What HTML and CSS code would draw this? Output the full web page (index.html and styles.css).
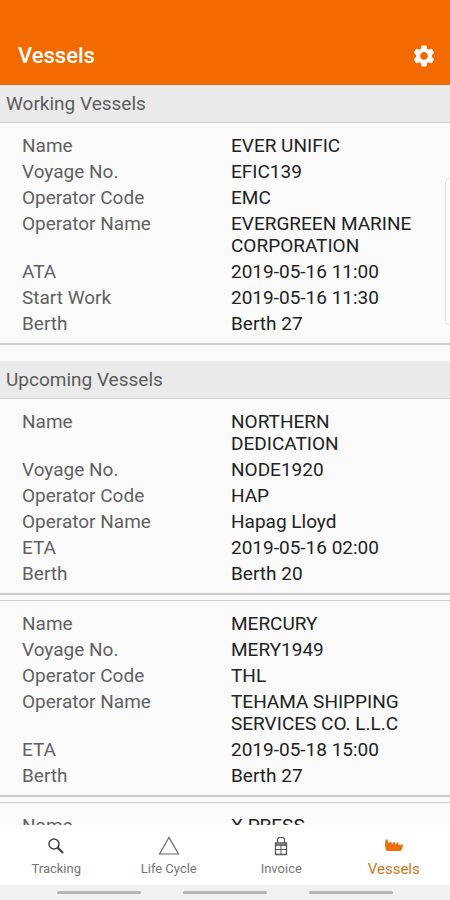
FILE: index.html
```html
<!DOCTYPE html>
<html lang="en">
<head>
    <meta charset="UTF-8">
    <meta name="viewport" content="width=device-width, initial-scale=1.0">
    <title>Vessels</title>
    <link rel="stylesheet" href="styles.css">
</head>
<body>
    <header class="app-bar">
        <h1>Vessels</h1>
        <button class="settings" aria-label="Settings">
            <svg viewBox="0 0 24 24" width="26" height="26" fill="currentColor">
                <path d="M19.14 12.94c.04-.3.06-.61.06-.94s-.02-.64-.07-.94l2.03-1.58c.18-.14.23-.41.12-.61l-1.92-3.32c-.12-.22-.37-.29-.59-.22l-2.39.96c-.5-.38-1.03-.7-1.62-.94l-.36-2.54c-.04-.24-.24-.41-.48-.41h-3.84c-.24 0-.43.17-.47.41l-.36 2.54c-.59.24-1.13.57-1.62.94l-2.39-.96c-.22-.08-.47 0-.59.22L2.74 8.87c-.12.21-.08.47.12.61l2.03 1.58c-.05.3-.09.63-.09.94s.02.64.07.94l-2.03 1.58c-.18.14-.23.41-.12.61l1.92 3.32c.12.22.37.29.59.22l2.39-.96c.5.38 1.03.7 1.62.94l.36 2.54c.05.24.24.41.48.41h3.84c.24 0 .44-.17.47-.41l.36-2.54c.59-.24 1.13-.56 1.62-.94l2.39.96c.22.08.47 0 .59-.22l1.92-3.32c.12-.22.07-.47-.12-.61l-2.01-1.58zM12 15.6c-1.98 0-3.6-1.62-3.6-3.6s1.62-3.6 3.6-3.6 3.6 1.62 3.6 3.6-1.62 3.6-3.6 3.6z"/>
            </svg>
        </button>
    </header>

    <main class="content">
        <section class="group">
            <h2>Working Vessels</h2>
            <dl class="vessel">
                <dt>Name</dt><dd>EVER UNIFIC</dd>
                <dt>Voyage No.</dt><dd>EFIC139</dd>
                <dt>Operator Code</dt><dd>EMC</dd>
                <dt>Operator Name</dt><dd>EVERGREEN MARINE CORPORATION</dd>
                <dt>ATA</dt><dd>2019-05-16 11:00</dd>
                <dt>Start Work</dt><dd>2019-05-16 11:30</dd>
                <dt>Berth</dt><dd>Berth 27</dd>
            </dl>
        </section>

        <section class="group">
            <h2>Upcoming Vessels</h2>
            <dl class="vessel">
                <dt>Name</dt><dd>NORTHERN DEDICATION</dd>
                <dt>Voyage No.</dt><dd>NODE1920</dd>
                <dt>Operator Code</dt><dd>HAP</dd>
                <dt>Operator Name</dt><dd>Hapag Lloyd</dd>
                <dt>ETA</dt><dd>2019-05-16 02:00</dd>
                <dt>Berth</dt><dd>Berth 20</dd>
            </dl>
            <dl class="vessel">
                <dt>Name</dt><dd>MERCURY</dd>
                <dt>Voyage No.</dt><dd>MERY1949</dd>
                <dt>Operator Code</dt><dd>THL</dd>
                <dt>Operator Name</dt><dd>TEHAMA SHIPPING SERVICES CO. L.L.C</dd>
                <dt>ETA</dt><dd>2019-05-18 15:00</dd>
                <dt>Berth</dt><dd>Berth 27</dd>
            </dl>
            <dl class="vessel">
                <dt>Name</dt><dd>X PRESS</dd>
            </dl>
        </section>
        <div class="edge-handle"></div>
    </main>

    <nav class="tabs">
        <a href="#tracking">
            <svg viewBox="0 0 24 24" width="24" height="24" fill="none" stroke="#444">
                <circle cx="10" cy="10" r="5" stroke-width="1.5"/>
                <path d="M13.6 13.6L19 19" stroke-width="2.4"/>
            </svg>
            <span>Tracking</span>
        </a>
        <a href="#lifecycle">
            <svg viewBox="0 0 24 24" width="24" height="24" fill="none" stroke="#666">
                <path d="M12 3.5L21.5 20H2.5z" stroke-width="1.2"/>
            </svg>
            <span>Life Cycle</span>
        </a>
        <a href="#invoice">
            <svg viewBox="0 0 24 24" width="24" height="24" fill="none" stroke="#555">
                <path d="M8.5 9V5L10 3.5h4L15.5 5v4" stroke-width="1.2"/>
                <path d="M6.5 9h11v11.500h-11z" stroke-width="1.3"/>
                <path d="M7 11h10" stroke-width="1.6"/>
                <path d="M7 15.500h10M12 11v9.500" stroke-width="1"/>
            </svg>
            <span>Invoice</span>
        </a>
        <a href="#vessels" class="active">
            <svg viewBox="0 0 24 24" width="24" height="24" fill="#ee6c0c">
                <path d="M3.500 5.500h2l.6 3.200 1.400.6V7.800h2v1.700l1.500.4V8.200h2v1.900l1.500.2V8.500h2v2.400l4.800-.4-1.600 4.700c-.4 1.200-1 1.800-2 1.800H5.500c-1 0-1.500-.6-1.700-1.500l-.8-4z"/>
            </svg>
            <span>Vessels</span>
        </a>
    </nav>

    <div class="system-bar">
        <i></i><i></i><i></i>
    </div>
</body>
</html>
```
FILE: styles.css
```css
* {
    margin: 0;
    padding: 0;
    box-sizing: border-box;
}

body {
    display: flex;
    flex-direction: column;
    height: 100vh;
    background: #fafafa;
    color: #222;
    font-family: Roboto, sans-serif;
    font-size: 19px;
    line-height: 22px;
}

.app-bar {
    display: flex;
    justify-content: space-between;
    align-items: center;
    padding: 41px 13px 15px 18px;
    background: #f26a00;
    color: #fff;
}

.app-bar h1 {
    font-size: 22px;
    font-weight: 500;
    line-height: 29px;
}

.settings {
    display: flex;
    border: none;
    background: none;
    color: #fff;
    cursor: pointer;
}

.content {
    position: relative;
    flex: 1;
    min-height: 0;
    overflow: hidden;
}

.group {
    margin-bottom: 16px;
}

.group h2 {
    padding: 8px 6px 7px;
    background: #eaeaea;
    color: #5c5c5c;
    font-size: 19px;
    font-weight: 400;
}

.vessel {
    display: grid;
    grid-template-columns: 1fr 1fr;
    gap: 4px 12px;
    padding: 12px 22px 8px;
    border-top: 1px solid #ccc;
    border-bottom: 2px solid #ccc;
}

.vessel + .vessel {
    margin-top: 5px;
}

.vessel dt {
    color: #616161;
}

/* system edge panel grip */
.edge-handle {
    position: absolute;
    top: 93px;
    right: 0;
    width: 5px;
    height: 147px;
    background: #fff;
    border: 1px solid #ddd;
    border-right: none;
    border-radius: 5px 0 0 5px;
}

.tabs {
    display: flex;
    background: #fff;
}

.tabs a {
    flex: 1;
    display: flex;
    flex-direction: column;
    align-items: center;
    padding: 9px 0 5px;
    color: #757575;
    font-size: 13px;
    text-decoration: none;
}

.tabs .active {
    color: #d0761c;
    font-size: 15px;
}

.system-bar {
    display: flex;
    justify-content: center;
    gap: 42px;
    padding: 6px 0;
    background: #f1f1f1;
}

.system-bar i {
    width: 84px;
    height: 3px;
    border-radius: 2px;
    background: #b5b5b5;
}
```
